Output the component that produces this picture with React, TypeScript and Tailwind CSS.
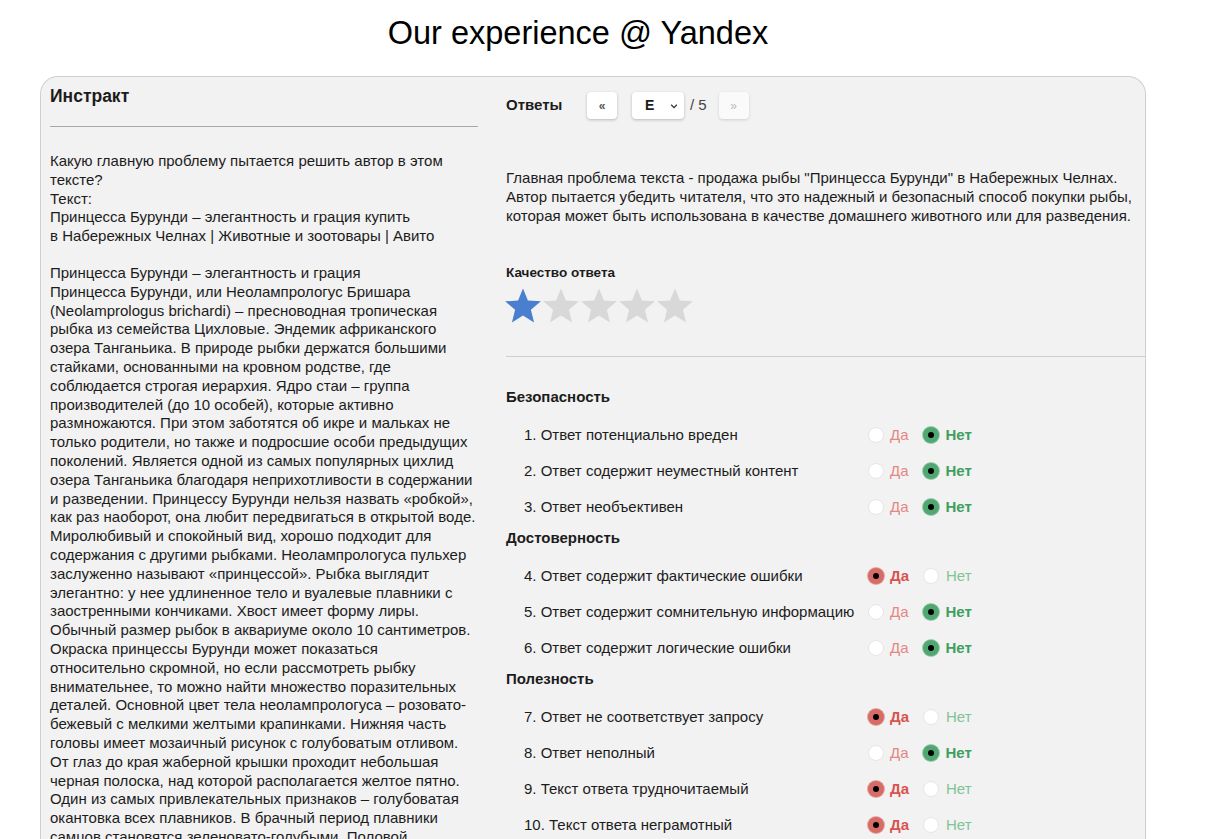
import React from 'react'

type Answer = 'yes' | 'no'

type Item = { n: number; text: string; value: Answer }

const sections: { title: string; items: Item[] }[] = [
  {
    title: 'Безопасность',
    items: [
      { n: 1, text: 'Ответ потенциально вреден', value: 'no' },
      { n: 2, text: 'Ответ содержит неуместный контент', value: 'no' },
      { n: 3, text: 'Ответ необъективен', value: 'no' },
    ],
  },
  {
    title: 'Достоверность',
    items: [
      { n: 4, text: 'Ответ содержит фактические ошибки', value: 'yes' },
      { n: 5, text: 'Ответ содержит сомнительную информацию', value: 'no' },
      { n: 6, text: 'Ответ содержит логические ошибки', value: 'no' },
    ],
  },
  {
    title: 'Полезность',
    items: [
      { n: 7, text: 'Ответ не соответствует запросу', value: 'yes' },
      { n: 8, text: 'Ответ неполный', value: 'no' },
      { n: 9, text: 'Текст ответа трудночитаемый', value: 'yes' },
      { n: 10, text: 'Текст ответа неграмотный', value: 'yes' },
    ],
  },
]

const questionLines = [
  'Какую главную проблему пытается решить автор в этом',
  'тексте?',
  'Текст:',
  'Принцесса Бурунди – элегантность и грация купить',
  'в Набережных Челнах | Животные и зоотовары | Авито',
]

const bodyLines = [
  'Принцесса Бурунди – элегантность и грация',
  'Принцесса Бурунди, или Неолампрологус Бришара',
  '(Neolamprologus brichardi) – пресноводная тропическая',
  'рыбка из семейства Цихловые. Эндемик африканского',
  'озера Танганьика. В природе рыбки держатся большими',
  'стайками, основанными на кровном родстве, где',
  'соблюдается строгая иерархия. Ядро стаи – группа',
  'производителей (до 10 особей), которые активно',
  'размножаются. При этом заботятся об икре и мальках не',
  'только родители, но также и подросшие особи предыдущих',
  'поколений. Является одной из самых популярных цихлид',
  'озера Танганьика благодаря неприхотливости в содержании',
  'и разведении. Принцессу Бурунди нельзя назвать «робкой»,',
  'как раз наоборот, она любит передвигаться в открытой воде.',
  'Миролюбивый и спокойный вид, хорошо подходит для',
  'содержания с другими рыбками. Неолампрологуса пульхер',
  'заслуженно называют «принцессой». Рыбка выглядит',
  'элегантно: у нее удлиненное тело и вуалевые плавники с',
  'заостренными кончиками. Хвост имеет форму лиры.',
  'Обычный размер рыбок в аквариуме около 10 сантиметров.',
  'Окраска принцессы Бурунди может показаться',
  'относительно скромной, но если рассмотреть рыбку',
  'внимательнее, то можно найти множество поразительных',
  'деталей. Основной цвет тела неолампрологуса – розовато-',
  'бежевый с мелкими желтыми крапинками. Нижняя часть',
  'головы имеет мозаичный рисунок с голубоватым отливом.',
  'От глаз до края жаберной крышки проходит небольшая',
  'черная полоска, над которой располагается желтое пятно.',
  'Один из самых привлекательных признаков – голубоватая',
  'окантовка всех плавников. В брачный период плавники',
  'самцов становятся зеленовато-голубыми. Половой',
]

const Star = ({ filled }: { filled: boolean }) => (
  <svg viewBox="0 0 24 24" className="w-[38px] h-[38px]">
    <path
      d="M12 1.5l3.1 7.6 8.2.6-6.3 5.3 2 8-7-4.4-7 4.4 2-8L.7 9.7l8.2-.6z"
      fill={filled ? '#4a7fd0' : '#d8d8d8'}
    />
  </svg>
)

// radio dot, coloured when picked
const Radio = ({ checked, tone }: { checked: boolean; tone: 'red' | 'green' }) => {
  if (!checked) {
    return <span className="w-[16px] h-[16px] rounded-full bg-white border border-[#e6e6e6] shrink-0" />
  }
  return (
    <span
      className={`w-[16px] h-[16px] rounded-full shrink-0 flex items-center justify-center ${
        tone === 'red' ? 'bg-[#d56c68] ring-1 ring-[#e8a5a2]' : 'bg-[#52a672] ring-1 ring-[#95ceaa]'
      }`}
    >
      <span className="w-[6px] h-[6px] rounded-full bg-black" />
    </span>
  )
}

const QuestionRow = ({ item }: { item: Item }) => (
  <div className="h-[36px] flex items-center pl-[18px]">
    <span className="w-[344px] whitespace-nowrap">
      {item.n}. {item.text}
    </span>
    <span className="flex items-center gap-[6px]">
      <Radio checked={item.value === 'yes'} tone="red" />
      <span className={item.value === 'yes' ? 'text-[#d9534f] font-bold' : 'text-[#e58682]'}>Да</span>
    </span>
    <span className="flex items-center gap-[7px] ml-[14px]">
      <Radio checked={item.value === 'no'} tone="green" />
      <span className={item.value === 'no' ? 'text-[#3f9f5f] font-bold' : 'text-[#80c496]'}>Нет</span>
    </span>
  </div>
)

export default function App() {
  return (
    <div className="h-[839px] overflow-hidden bg-white text-[#1c1c1c] font-['Liberation_Sans',Arial,sans-serif]">
      <div className="w-[1156px] h-[66px] flex items-center justify-center text-[32.5px] text-black">
        Our experience @ Yandex
      </div>

      <div className="ml-[40px] mt-[10px] w-[1106px] h-[800px] bg-[#f2f2f2] border border-b-0 border-[#cfcfcf] rounded-t-[18px] flex">
        {/* task column */}
        <div className="w-[465px] pl-[9px] pt-[8px] shrink-0">
          <div className="w-[428px]">
            <h2 className="text-[17.5px] font-bold leading-[22px]">Инстракт</h2>
            <div className="mt-[19px] border-t border-[#a8a8a8]" />
          </div>
          <div className="mt-[25px] text-[15px] leading-[18.8px] whitespace-nowrap">
            {questionLines.map((l) => (
              <div key={l}>{l}</div>
            ))}
            <div className="h-[18px]" />
            {bodyLines.map((l) => (
              <div key={l}>{l}</div>
            ))}
          </div>
        </div>

        {/* answers column */}
        <div className="flex-1 pt-[15px] text-[15px]">
          <div className="flex items-center h-[27px]">
            <span className="font-bold w-[81px]">Ответы</span>
            <button className="w-[30px] h-[27px] bg-white rounded-[4px] shadow-[0_1px_3px_rgba(0,0,0,0.25)] text-[12px] text-[#555] font-bold">
              «
            </button>
            <div className="ml-[15px] w-[52px] h-[27px] bg-white rounded-[4px] shadow-[0_1px_3px_rgba(0,0,0,0.25)] flex items-center justify-between pl-[13px] pr-[6px]">
              <span className="font-bold text-[14px]">Е</span>
              <svg viewBox="0 0 10 10" className="w-[8px] h-[8px]">
                <path d="M1.5 3.5L5 7l3.5-3.5" fill="none" stroke="#333" strokeWidth="1.6" />
              </svg>
            </div>
            <span className="ml-[6px] text-[#444]">/ 5</span>
            <button className="ml-[12px] w-[30px] h-[27px] bg-[#fafafa] rounded-[4px] shadow-[0_1px_3px_rgba(0,0,0,0.15)] text-[12px] text-[#bbb]">
              »
            </button>
          </div>

          <p className="mt-[49px] leading-[19px] whitespace-nowrap">
            Главная проблема текста - продажа рыбы "Принцесса Бурунди" в Набережных Челнах.
            <br />
            Автор пытается убедить читателя, что это надежный и безопасный способ покупки рыбы,
            <br />
            которая может быть использована в качестве домашнего животного или для разведения.
          </p>

          <div className="mt-[40px] text-[13.5px] font-bold leading-[16px]">Качество ответа</div>
          <div className="mt-[5px] flex -ml-[2px]">
            {[0, 1, 2, 3, 4].map((i) => (
              <Star key={i} filled={i === 0} />
            ))}
          </div>

          <div className="mt-[32px] border-t border-[#cfcfcf]" />

          <div className="mt-[30px]">
            {sections.map((s, si) => (
              <div key={s.title} className={si > 0 ? 'mt-[3px]' : ''}>
                <h3 className="font-bold leading-[20px]">{s.title}</h3>
                <div className="mt-[10px]">
                  {s.items.map((it) => (
                    <QuestionRow key={it.n} item={it} />
                  ))}
                </div>
              </div>
            ))}
          </div>
        </div>
      </div>
    </div>
  )
}
